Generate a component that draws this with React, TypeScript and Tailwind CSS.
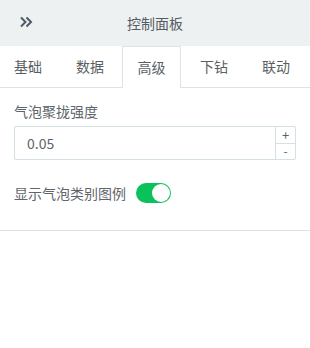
import { useState } from 'react';

const tabs = ['基础', '数据', '高级', '下钻', '联动'];

export default function App() {
  const [active, setActive] = useState(2);
  const [value, setValue] = useState('0.05');
  const [showLegend, setShowLegend] = useState(true);

  const step = (d: number) => {
    const n = Math.round((parseFloat(value || '0') + d) * 100) / 100;
    setValue(n.toFixed(2));
  };

  return (
    <div
      className="w-[310px] h-[348px] bg-white text-[#5f6368]"
      style={{ fontFamily: '"Noto Sans CJK SC", "Liberation Sans", sans-serif' }}
    >
      {/* Header */}
      <div className="relative h-[46px] bg-[#eef1f2] flex items-center justify-center">
        <svg
          className="absolute left-[19px] top-[15px]"
          width="14"
          height="14"
          viewBox="0 0 14 14"
          fill="none"
          stroke="#4b5a65"
          strokeWidth="2"
        >
          <path d="M2 2.5 L6.5 7 L2 11.5" />
          <path d="M7.5 2.5 L12 7 L7.5 11.5" />
        </svg>
        <span className="text-[14px] text-[#555b60]">控制面板</span>
      </div>

      {/* Tabs */}
      <div className="flex gap-[6px] h-[42px] border-b border-[#dbe4e7]">
        {tabs.map((t, i) => (
          <button
            key={t}
            onClick={() => setActive(i)}
            className={
              i === active
                ? 'w-[59px] -ml-[2px] -mr-[1px] -mb-px text-[14px] text-[#5a5f63] border-x border-t border-[#dbe4e7] bg-white'
                : 'w-[56px] text-[14px] text-[#5a5f63]'
            }
          >
            {t}
          </button>
        ))}
      </div>

      {/* Settings */}
      <div className="px-[14px] pt-[13px] pb-[27px] border-b border-[#dbe4e7]">
        <div className="text-[14px] leading-[20px] text-[#60656a]">气泡聚拢强度</div>
        <div className="mt-[5px] h-[34px] flex border border-[#d3e0e4] rounded-[2px]">
          <input
            value={value}
            onChange={(e) => setValue(e.target.value)}
            className="flex-1 min-w-0 px-[12px] text-[14px] text-[#5f6368] outline-none"
          />
          <div className="w-[20px] flex flex-col border-l border-[#d3e0e4] text-[#5f6368]">
            <button onClick={() => step(0.01)} className="flex-1 flex items-center justify-center text-[13px] leading-[12px] border-b border-[#d3e0e4]">
              +
            </button>
            <button onClick={() => step(-0.01)} className="flex-1 flex items-center justify-center text-[12px] leading-[12px]">
              -
            </button>
          </div>
        </div>

        <div className="mt-[23px] flex items-center gap-[10px]">
          <span className="text-[14px] leading-[20px] text-[#60656a]">显示气泡类别图例</span>
          <button
            onClick={() => setShowLegend(!showLegend)}
            className={
              showLegend
                ? 'w-[35px] h-[20px] rounded-full bg-[#0bc15a] flex items-center justify-end px-[1px]'
                : 'w-[35px] h-[20px] rounded-full bg-[#dcdfe6] flex items-center justify-start px-[1px]'
            }
          >
            <span className="w-[18px] h-[18px] rounded-full bg-white" />
          </button>
        </div>
      </div>
    </div>
  );
}
